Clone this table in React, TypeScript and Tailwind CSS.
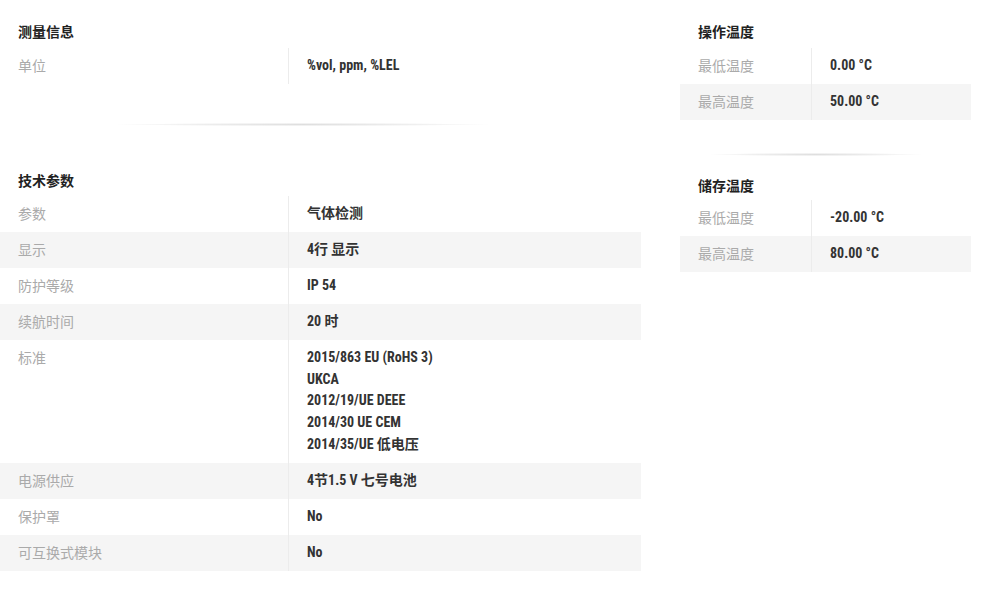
import React from "react";

const valueFont = {
  fontFamily:
    "'Roboto Condensed','Liberation Sans Narrow',Roboto,'Noto Sans CJK SC',sans-serif",
};

type Row = { label: string; value: string[] };

function Table({ rows, labelW }: { rows: Row[]; labelW: string }) {
  return (
    <div>
      {rows.map((r, i) => (
        <div key={i} className={`flex ${i % 2 === 1 ? "bg-[#f5f5f5]" : ""}`}>
          <div
            className={`${labelW} shrink-0 border-r border-[#ececec] pl-[18px] py-[7px] text-[14px] leading-[22px] text-[#aaaaaa]`}
          >
            {r.label}
          </div>
          <div
            className="pl-[18px] py-[7px] text-[14px] leading-[21.7px] font-bold text-[#333]"
            style={valueFont}
          >
            {r.value.map((v, j) => (
              <div key={j}>{v}</div>
            ))}
          </div>
        </div>
      ))}
    </div>
  );
}

function Header({ children, className = "" }: { children: React.ReactNode; className?: string }) {
  return (
    <div className={`pl-[18px] text-[14px] leading-[20px] font-bold text-[#222] ${className}`}>
      {children}
    </div>
  );
}

function Fade({ className = "" }: { className?: string }) {
  return (
    <div
      className={`h-[3px] bg-[radial-gradient(ellipse_at_center,rgba(0,0,0,0.13)_0%,rgba(0,0,0,0.06)_45%,rgba(0,0,0,0)_72%)] ${className}`}
    />
  );
}

export default function App() {
  return (
    <div
      className="w-[992px] h-[601px] bg-white flex gap-[39px] overflow-hidden"
      style={{ fontFamily: "Roboto,'Noto Sans CJK SC',sans-serif" }}
    >
      <div className="w-[641px] shrink-0">
        <Header className="mt-[22px] mb-[6px]">测量信息</Header>
        <Table labelW="w-[289px]" rows={[{ label: "单位", value: ["%vol, ppm, %LEL"] }]} />
        <Fade className="mt-[39px] mx-auto w-[370px] relative left-[-18px]" />
        <Header className="mt-[45px] mb-[5px]">技术参数</Header>
        <Table
          labelW="w-[289px]"
          rows={[
            { label: "参数", value: ["气体检测"] },
            { label: "显示", value: ["4行 显示"] },
            { label: "防护等级", value: ["IP 54"] },
            { label: "续航时间", value: ["20 时"] },
            {
              label: "标准",
              value: [
                "2015/863 EU (RoHS 3)",
                "UKCA",
                "2012/19/UE DEEE",
                "2014/30 UE CEM",
                "2014/35/UE 低电压",
              ],
            },
            { label: "电源供应", value: ["4节1.5 V 七号电池"] },
            { label: "保护罩", value: ["No"] },
            { label: "可互换式模块", value: ["No"] },
          ]}
        />
      </div>
      <div className="w-[291px] shrink-0">
        <Header className="mt-[22px] mb-[6px]">操作温度</Header>
        <Table
          labelW="w-[132px]"
          rows={[
            { label: "最低温度", value: ["0.00 °C"] },
            { label: "最高温度", value: ["50.00 °C"] },
          ]}
        />
        <Fade className="mt-[33px] mx-auto w-[210px] relative left-[-10px]" />
        <Header className="mt-[20px] mb-[4px]">储存温度</Header>
        <Table
          labelW="w-[132px]"
          rows={[
            { label: "最低温度", value: ["-20.00 °C"] },
            { label: "最高温度", value: ["80.00 °C"] },
          ]}
        />
      </div>
    </div>
  );
}
